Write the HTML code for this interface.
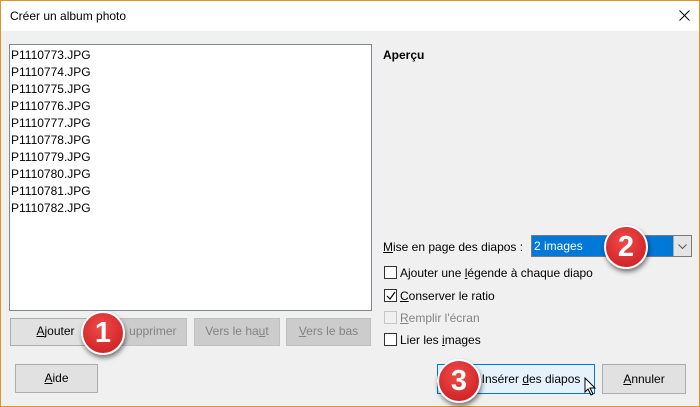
<!DOCTYPE html><html><head><style>
body{margin:0;width:700px;height:407px;overflow:hidden;font-family:"Liberation Sans",sans-serif;font-size:12px;color:#000}
#w{position:absolute;left:0;top:0;width:698px;height:405px;border:1px solid #e3922a;background:#f0f0f0}
#t{position:absolute;left:0;top:0;width:698px;height:30px;background:#fff}
.a{position:absolute}
.btn{position:absolute;border:1px solid #adadad;background:#e1e1e1;text-align:center;box-sizing:border-box;line-height:25px}
.dis{color:#838383;border-color:#bfbfbf;background:#cccccc}
.cb{position:absolute;left:383px;width:13px;height:13px;border:1px solid #333;background:#fff;box-sizing:border-box}
.lb{position:absolute;left:399px}
.badge{position:absolute;width:40px;height:40px;border-radius:50%;background:radial-gradient(circle at 45% 35%,#ef4a48,#c8191d);border:2px solid #fff;box-shadow:1px 3px 5px rgba(0,0,0,.5);color:#fff;font-weight:bold;font-size:29px;text-align:center;line-height:40px}
u{text-decoration:underline}
</style></head><body><div id="w">
<div id="t"><span class="a" style="left:9px;top:8px">Créer un album photo</span><svg class="a" style="left:678px;top:9px" width="11" height="11"><path d="M0.5 0.5L10.5 10.5M10.5 0.5L0.5 10.5" stroke="#000" stroke-width="1"/></svg></div>
<div class="a" style="left:8px;top:43px;width:361px;height:265px;background:#fff;border:1px solid #828790"></div>
<div class="a" style="left:10px;top:46px;line-height:17px">P1110773.JPG<br>P1110774.JPG<br>P1110775.JPG<br>P1110776.JPG<br>P1110777.JPG<br>P1110778.JPG<br>P1110779.JPG<br>P1110780.JPG<br>P1110781.JPG<br>P1110782.JPG</div>
<div class="a" style="left:382px;top:47px;font-weight:bold">Aperçu</div>
<div class="btn" style="left:9px;top:317px;width:91px;height:28px"><u>A</u>jouter</div>
<div class="btn dis" style="left:101px;top:317px;width:85px;height:28px">&nbsp;&nbsp;&nbsp;&nbsp;&nbsp;upprimer</div>
<div class="btn dis" style="left:193px;top:317px;width:86px;height:28px">Vers le ha<u>u</u>t</div>
<div class="btn dis" style="left:285px;top:317px;width:85px;height:28px"><u>V</u>ers le bas</div>
<div class="btn" style="left:14px;top:363px;width:83px;height:29px;line-height:27px"><u>A</u>ide</div>
<div class="a" style="left:382px;top:239px"><u>M</u>ise en page des diapos :</div>
<div class="a" style="left:530px;top:234px;width:161px;height:22px;border:1px solid #7a7a7a;box-sizing:border-box;background:#0078d7"><span class="a" style="left:2px;top:3px;color:#fff">2 images</span><div class="a" style="right:0;top:0;width:17px;height:20px;background:#e5e5e5;border-left:1px solid #aaa"><svg class="a" style="left:4px;top:8px" width="9" height="5"><path d="M0.5 0.5L4.5 4.5L8.5 0.5" fill="none" stroke="#555"/></svg></div></div>
<div class="cb" style="top:265px"></div><div class="lb" style="top:265px">Ajouter une <u>l</u>égende à chaque diapo</div>
<div class="cb" style="top:288px"><svg class="a" style="left:1px;top:1px" width="10" height="10"><path d="M1 5L4 8L9 1" fill="none" stroke="#000" stroke-width="1.2"/></svg></div><div class="lb" style="top:288px"><u>C</u>onserver le ratio</div>
<div class="cb" style="top:310px;border-color:#c5c5c5;background:#f0f0f0"></div><div class="lb" style="top:310px;color:#838383"><u>R</u>emplir l'écran</div>
<div class="cb" style="top:332px"></div><div class="lb" style="top:332px">Lier les <u>i</u>mages</div>
<div class="btn" style="left:436px;top:363px;width:158px;height:30px;background:#e5f1fb;border-color:#0078d7;line-height:28px;padding-left:30px">Insérer <u>d</u>es diapos</div>
<div class="btn" style="left:601px;top:363px;width:84px;height:30px;line-height:28px"><u>A</u>nnuler</div>
<div class="badge" style="left:80px;top:310px">1</div>
<div class="badge" style="left:603px;top:224px">2</div>
<div class="badge" style="left:436px;top:358px">3</div>
<svg class="a" style="left:583px;top:376px" width="14" height="20"><path d="M1 1 L1 15 L4 12 L7 18 L9 17 L6 11 L11 11 Z" fill="#fff" stroke="#000"/></svg>
</div></body></html>
